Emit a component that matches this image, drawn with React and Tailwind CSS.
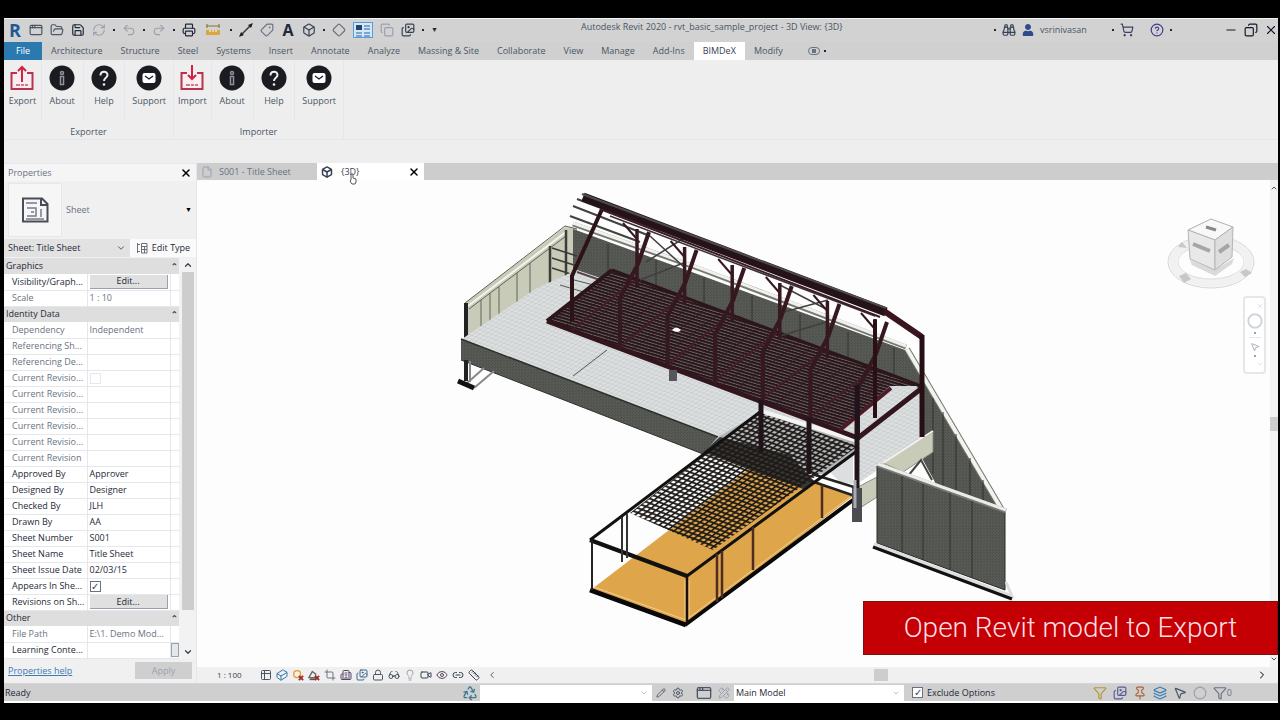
import React from 'react';
import {
    AppWindow, FolderOpen, Save, RefreshCw, Undo2, Redo2, Printer, Tag, Box, Diamond, Copy, X,
    Layers, Binoculars, ShoppingCart, CircleHelp, Minus, File, ChevronDown, ChevronUp, ChevronLeft, ChevronRight,
    Table2, Crop, Eye, Glasses, Lightbulb, Video, Building2, Link2, Ruler, Filter, Circle,
    Settings, PencilRuler, Cuboid, MousePointer2, Pin, Recycle, Images, Pencil, Lock,
} from 'lucide-react';
import { FaUser } from 'react-icons/fa';
import { clsx } from 'clsx';

const Dot = () => <span className="w-0.5 h-0.5 shrink-0 bg-gray-800" />;

const ToolButton = ({ icon: Icon, label, className, wide }) => (
    <button aria-label={label} className={clsx('h-4 shrink-0 flex items-center justify-center', wide ? 'w-5' : 'w-3.5', className)}>
        <Icon className="size-3.5" />
    </button>
);

const MeasureIcon = ({ className }) => (
    <svg viewBox="0 0 14 14" className={className} fill="none">
        <path d="M0 3H14M1 1V5M13 1V5" stroke="#8a7238" />
        <rect x="0" y="7" width="14" height="5" fill="#d9a640" />
        <path d="M4 7V9M7 7V9M10 7V9" stroke="#fff" />
    </svg>
);

const LineIcon = ({ className }) => (
    <svg viewBox="0 0 14 14" className={className}>
        <path d="M2 12L12 2" stroke="#333" strokeWidth="1.5" />
        <path d="M0 14L2 9L5 12ZM14 0L12 5L9 2Z" fill="#222" />
    </svg>
);

const ThinLinesIcon = ({ className }) => (
    <svg viewBox="0 0 14 14" className={className} fill="none">
        <path d="M0 2H6V7H0Z" fill="#24466e" />
        <path d="M8 3H14M8 6H14M0 10H6M8 10H14M0 13H6M8 13H14" stroke="#5b8fc4" strokeWidth="1.500" />
    </svg>
);

const SunOffIcon = ({ className }) => (
    <svg viewBox="0 0 14 14" className={className} fill="none">
        <circle cx="6" cy="6" r="4" fill="#fff3d8" stroke="#dc9a3c" strokeWidth="1.500" />
        <path d="M8 8L13 13M13 8L8 13" stroke="#a02626" strokeWidth="2" />
    </svg>
);

const ShadowOffIcon = ({ className }) => (
    <svg viewBox="0 0 14 14" className={className} fill="none">
        <path d="M1 10L5 3L9 6V10Z" fill="#eee" stroke="#666" strokeWidth="1.500" />
        <path d="M2 12H9" stroke="#555" strokeWidth="2" />
        <path d="M8 8L13 13M13 8L8 13" stroke="#a02626" strokeWidth="2" />
    </svg>
);

const TypeIcon = ({ className }) => (
    <svg viewBox="0 0 12 12" className={className} fill="none" stroke="#6b7078">
        <path d="M1.500 1V11M1.500 2.500H4M1.500 9.500H4M5.500 1.500H11V11H5.500ZM5.500 4.500H11M5.500 7.500H11M8.500 4.500V11" />
    </svg>
);

const TitleBar = () => (
    <header className="relative flex items-center justify-between h-6 bg-[#d2d2d2] border-t border-gray-100 pb-0.5 text-gray-600">
        <div className="flex items-center gap-[7px] pl-1">
            <button aria-label="Application menu" className="w-3.5 text-lg leading-4 font-bold text-[#1b5896]">R</button>
            <ToolButton icon={AppWindow} label="Home" />
            <ToolButton icon={FolderOpen} label="Open" />
            <ToolButton icon={Save} label="Save" className="text-gray-800" />
            <ToolButton icon={RefreshCw} label="Synchronize" className="text-gray-400" />
            <Dot />
            <ToolButton icon={Undo2} label="Undo" className="text-gray-400" />
            <Dot />
            <ToolButton icon={Redo2} label="Redo" className="text-gray-400" />
            <Dot />
            <ToolButton icon={Printer} label="Print" className="text-gray-800" />
            <ToolButton icon={MeasureIcon} label="Measure" wide />
            <Dot />
            <ToolButton icon={LineIcon} label="Aligned dimension" />
            <ToolButton icon={Tag} label="Tag by category" className="-scale-x-100 text-gray-500" />
            <button aria-label="Text" className="w-3.5 text-base leading-4 font-bold text-gray-800">A</button>
            <ToolButton icon={Box} label="Default 3D view" className="text-gray-700" />
            <Dot />
            <ToolButton icon={Diamond} label="Section" className="text-gray-500" />
            <ToolButton icon={ThinLinesIcon} label="Thin lines" wide className="bg-[#d5e6f7] border border-[#5b9bd8]" />
            <ToolButton icon={Copy} label="Close inactive views" className="text-gray-400" />
            <ToolButton icon={Images} label="Switch windows" className="text-gray-700" />
            <Dot />
            <button aria-label="Customize toolbar" className="text-[7px] leading-4 text-gray-800">▼</button>
        </div>
        <h1 className="absolute left-[577px] top-0.5 text-[9px] leading-3 whitespace-nowrap">
            Autodesk Revit 2020 - rvt_basic_sample_project - 3D View: {'{3D}'}
        </h1>
        <div className="flex items-center gap-1.5">
            <Dot />
            <ToolButton icon={Binoculars} label="Search" className="text-gray-700" />
            <FaUser className="size-3 text-[#2c4a8c]" />
            <span className="w-[66px] text-[9px] leading-3">vsrinivasan</span>
            <Dot />
            <ToolButton icon={ShoppingCart} label="App store" className="text-[#3d3f66]" />
            <span className="w-1" />
            <ToolButton icon={CircleHelp} label="Help" className="text-[#3d3f8c]" />
            <Dot />
            <span className="w-10" />
            <ToolButton icon={Minus} label="Minimize" className="text-gray-900" />
            <ToolButton icon={Copy} label="Restore" className="-scale-x-100 text-gray-900" />
            <ToolButton icon={X} label="Close" className="text-gray-900" />
        </div>
    </header>
);

const MENU = [
    'Architecture', 'Structure', 'Steel', 'Systems', 'Insert', 'Annotate', 'Analyze', 'Massing & Site',
    'Collaborate', 'View', 'Manage', 'Add-Ins', 'BIMDeX', 'Modify',
];

const MenuTabs = () => (
    <nav className="flex h-[18px] bg-[#d0d0d0] text-[9px] leading-[18px] text-gray-600">
        <button className="w-[38px] bg-[#2a7ab0] text-white">File</button>
        {MENU.map((name) => (
            <button key={name} className={clsx('px-[9px]', name === 'BIMDeX' && 'bg-white text-gray-700')}>{name}</button>
        ))}
        <button aria-label="Ribbon display" className="flex items-center gap-1 pl-4">
            <span className="w-3 h-2 rounded-full border border-gray-500 flex items-center justify-center">
                <span className="w-1 h-1 bg-gray-500" />
            </span>
            <Dot />
        </button>
    </nav>
);

const ExchangeIcon = ({ up }) => (
    <svg viewBox="0 0 26 26" className="size-[26px]" fill="none" stroke="#b8344e" strokeWidth="2">
        <path d="M8 8H2.500V24H23.500V8H18" fill="#fbeef0" />
        {up ? <path d="M13 17V2M9 6L13 2L17 6" stroke="#d02243" /> : <path d="M13 0V14M9 10L13 14L17 10" stroke="#d02243" />}
        <path d="M7 20H11M12 20H15M16 20H19" stroke="#cf7d8b" />
    </svg>
);

const RoundIcon = ({ kind }) => (
    <svg viewBox="0 0 26 26" className="size-[26px]">
        <circle cx="13" cy="13" r="12.500" fill="#1b1c22" />
        {kind === 'About' && (
            <g fill="none" stroke="#8f929a" strokeWidth="1.500">
                <circle cx="13" cy="8" r="1.500" />
                <rect x="11.500" y="11.500" width="3" height="8" />
            </g>
        )}
        {kind === 'Help' && (
            <g>
                <path d="M9.500 10.500C9.500 5.500 16.500 5.500 16.500 10C16.500 13 13 12.500 13 16" fill="none" stroke="#f0f0f0" strokeWidth="2" />
                <circle cx="13" cy="19.500" r="1.300" fill="#f0f0f0" />
            </g>
        )}
        {kind === 'Support' && (
            <g>
                <rect x="6.500" y="8" width="13" height="10" rx="2" fill="#fff" />
                <path d="M9 11L13 14L17 11" fill="none" stroke="#1b1c22" strokeWidth="1.300" />
            </g>
        )}
    </svg>
);

const RibbonPanel = ({ title, first }) => (
    <section className="flex flex-col w-[170px] border-r border-gray-200">
        <div className="flex">
            {[first, 'About', 'Help', 'Support'].map((name) => (
                <button
                    key={name}
                    className={clsx(
                        'flex flex-col items-center h-[60px] pt-[5px] text-[9px] leading-3 text-gray-600',
                        name === first && 'w-[38px] border-r border-gray-200',
                        name === 'Support' ? 'w-[48px]' : name !== first && 'w-[42px] border-r border-gray-200'
                    )}
                >
                    {name === first ? <ExchangeIcon up={first === 'Export'} /> : <RoundIcon kind={name} />}
                    <span className="mt-1">{name}</span>
                </button>
            ))}
        </div>
        <h2 className="mt-1.5 text-center text-[9px] leading-3 text-gray-600">{title}</h2>
    </section>
);

const ROWS = [
    { group: 'Graphics' },
    { label: 'Visibility/Graph...', edit: true },
    { label: 'Scale', value: '1 : 10', dim: true },
    { group: 'Identity Data' },
    { label: 'Dependency', value: 'Independent', dim: true },
    { label: 'Referencing Sh...', dim: true },
    { label: 'Referencing De...', dim: true },
    { label: 'Current Revisio...', dim: true, check: 'off' },
    { label: 'Current Revisio...', dim: true },
    { label: 'Current Revisio...', dim: true },
    { label: 'Current Revisio...', dim: true },
    { label: 'Current Revisio...', dim: true },
    { label: 'Current Revision', dim: true },
    { label: 'Approved By', value: 'Approver' },
    { label: 'Designed By', value: 'Designer' },
    { label: 'Checked By', value: 'JLH' },
    { label: 'Drawn By', value: 'AA' },
    { label: 'Sheet Number', value: 'S001' },
    { label: 'Sheet Name', value: 'Title Sheet' },
    { label: 'Sheet Issue Date', value: '02/03/15' },
    { label: 'Appears In She...', check: 'on' },
    { label: 'Revisions on Sh...', edit: true },
    { group: 'Other' },
    { label: 'File Path', value: 'E:\\1. Demo Mod...', dim: true },
    { label: 'Learning Conte...', more: true },
];

const CheckBox = ({ label, checked, dim }) => (
    <input
        type="checkbox"
        aria-label={label}
        defaultChecked={checked}
        className={clsx(
            "appearance-none block size-[11px] shrink-0 border bg-white text-[10px] leading-[9px] text-center text-gray-700 checked:before:content-['✓']",
            dim ? 'border-gray-200' : 'border-gray-500'
        )}
    />
);

const PropertyRow = ({ row }) => {
    if (row.group) {
        return (
            <tr className="h-4 bg-[#dedede]">
                <th colSpan={2} scope="colgroup" className="pl-0.5 text-left font-medium text-gray-800">{row.group}</th>
                <th className="text-[8px] leading-3 text-gray-700">⌃</th>
            </tr>
        );
    }
    return (
        <tr className={clsx('h-4 border-b border-gray-200', row.dim ? 'text-gray-500' : 'text-gray-800')}>
            <th scope="row" className="pl-2 text-left font-normal whitespace-nowrap border-r border-gray-200">{row.label}</th>
            <td className="px-0.5 border-r border-gray-200 whitespace-nowrap">
                {row.edit && <button className="block w-full h-3.5 bg-[#e0e0e0] border-b border-r border-gray-400 leading-3">Edit...</button>}
                {row.check && <CheckBox label={row.label} checked={row.check === 'on'} dim={row.dim} />}
                {row.value}
            </td>
            <td>{row.more && <button aria-label="Browse" className="block w-full h-3.5 bg-gray-200 border border-gray-400" />}</td>
        </tr>
    );
};

const SheetIcon = () => (
    <svg viewBox="0 0 28 26" className="w-7 h-[26px]" fill="none" stroke="#4a4c58" strokeWidth="2">
        <path d="M2 1.500H21L26.500 7V24.500H2Z" fill="#f6f6f8" />
        <path d="M20 2V8H26" />
        <path d="M5 6H16M6 11H15V19H6M10 15H13M20 12V20M5 22H23" stroke="#777a88" strokeWidth="1.500" />
    </svg>
);

const PropertiesPanel = () => (
    <aside className="flex flex-col w-[193px] shrink-0 bg-[#f0f0f0] text-[9px] leading-3 text-gray-700 border-r border-gray-200">
        <div className="flex items-center justify-between h-[18px] pl-1 pr-1 bg-[#f5f5f5] border-t border-gray-200">
            <h2 className="text-gray-500">Properties</h2>
            <button aria-label="Close properties"><X className="size-3 text-black" strokeWidth={3} /></button>
        </div>
        <button className="flex items-center h-[57px] pl-1 pr-1">
            <span className="flex items-center justify-center w-[54px] h-[54px] bg-[#f6f6f6] border border-gray-200"><SheetIcon /></span>
            <span className="flex-1 pl-1 text-left text-gray-500">Sheet</span>
            <span className="text-[7px] text-black">▼</span>
        </button>
        <div className="flex items-center h-5">
            <div className="relative w-[126px]">
                <select aria-label="Instance" className="appearance-none w-full h-[18px] pl-1 bg-[#e2e2e2] text-gray-800">
                    <option>Sheet: Title Sheet</option>
                </select>
                <ChevronDown className="absolute right-1 top-1 size-2.5 pointer-events-none" />
            </div>
            <button className="flex flex-1 items-center justify-center gap-1 h-[18px] bg-[#fafafa] text-gray-800">
                <TypeIcon className="size-3" />
                Edit Type
            </button>
        </div>
        <div className="flex">
            <table className="table-fixed w-[175px] bg-white border-collapse leading-3">
                <colgroup>
                    <col className="w-[83px]" />
                    <col className="w-[83px]" />
                    <col className="w-[9px]" />
                </colgroup>
                <tbody>
                    {ROWS.map((row, i) => <PropertyRow key={i} row={row} />)}
                </tbody>
            </table>
            <div className="flex flex-1 flex-col items-center justify-between bg-[#f2f2f2]">
                <ChevronUp className="my-0.5 size-2.5 shrink-0" strokeWidth={3} />
                <span className="w-3 h-[338px] bg-[#cdcdcd]" />
                <span className="flex-1" />
                <ChevronDown className="my-0.5 size-2.5 shrink-0" strokeWidth={3} />
            </div>
        </div>
        <div className="flex flex-1 items-center justify-between pl-1 pr-1">
            <a href="#help" className="text-[#3f7ab8] underline">Properties help</a>
            <button className="w-[57px] h-[17px] bg-[#cfcfcf] text-gray-400">Apply</button>
        </div>
    </aside>
);

const DocumentTabs = () => (
    <div className="flex h-[17px] bg-[#cdcdcd] text-[9px] leading-3">
        <button className="flex items-center gap-1.5 w-[120px] pl-1 text-gray-500">
            <File className="size-3 text-gray-400" />
            S001 - Title Sheet
        </button>
        <div className="relative flex items-center justify-between w-[107px] pl-1 pr-1 bg-white">
            <button className="flex items-center gap-2 text-gray-700">
                <Box className="size-3" strokeWidth={3} />
                {'{3D}'}
            </button>
            <button aria-label="Close view"><X className="size-3 text-black" strokeWidth={3} /></button>
            <svg viewBox="0 0 8 12" className="absolute left-8 top-2.5 w-2 h-3">
                <path d="M2 7V1H4V5L7 6V9L6 11H3L1 8Z" fill="#fff" stroke="#555" />
            </svg>
        </div>
    </div>
);

// Front columns of the steel frame, one bay apart
const BAYS = [0, 1, 2, 3, 4, 5];

const Model = () => (
    <svg viewBox="197 180 1073 487" className="block w-full h-full" fill="none" role="img" aria-label="3D structural model">
        <defs>
            <pattern id="tiles" width="4" height="4" patternUnits="userSpaceOnUse" patternTransform="matrix(1 .38 -1 .7 0 0)">
                <rect width="4" height="4" fill="#dcdfdf" />
                <path d="M0 0H4M0 0V4" stroke="#bdc1c2" strokeWidth=".8" />
            </pattern>
            <pattern id="joists" width="14" height="3" patternUnits="userSpaceOnUse" patternTransform="matrix(1 .3 -1 .75 0 0)">
                <rect width="14" height="3" fill="#6e605f" />
                <path d="M0 1H14" stroke="#24151a" strokeWidth="2" />
                <path d="M0 0V3" stroke="#34151d" strokeWidth="1.500" />
            </pattern>
            <pattern id="mesh" width="5" height="4" patternUnits="userSpaceOnUse" patternTransform="matrix(1 .38 -1 .78 0 0)">
                <path d="M0 1H5M1 0V4" stroke="#1c1815" strokeWidth="1.800" />
            </pattern>
            <pattern id="concrete" width="3" height="3" patternUnits="userSpaceOnUse">
                <rect width="3" height="3" fill="#575955" />
                <path d="M0 0H1V1H0ZM2 1H3V2H2Z" fill="#4b4d49" />
            </pattern>
        </defs>

        {/* left and rear walls */}
        <path d="M465 303L565 227L577 229V272L540 289L468 340Z" fill="#c9cbb9" />
        <path d="M465 303L565 226L577 229" stroke="#5c5e55" />
        <path d="M468 306L566 232" stroke="#f4f4ee" strokeWidth="2" />
        <path d="M469 309L566 236M481 300V328M490 293V322M499 287V316M517 273V302M530 263V293" stroke="#62645a" />
        <path d="M550 246V288M566 230V277M575 230V272" stroke="#3c3e38" strokeWidth="2.500" />
        <path d="M466 303V340" stroke="#222" strokeWidth="4" />
        <path d="M573 229L700 275L905 350L922 380V400L700 330L573 268Z" fill="url(#concrete)" />
        <path d="M573 224L700 269L906 347" stroke="#777972" strokeWidth="5" />
        <path d="M573 223L700 268L906 346" stroke="#f0f0ec" strokeWidth="3" />
        <path d="M608 244V278M656 260V296M704 278V314M752 296V330M800 314V350M848 332V368M894 348V384" stroke="#33352f" />
        <path d="M552 248L577 256M552 258L577 266M552 268L577 276" stroke="#3a3c3a" strokeWidth="1.500" />

        {/* concrete deck */}
        <path d="M462 339L537 288L577 270L922 388L933 432L860 482L858 438L761 410L718 438Z" fill="url(#tiles)" />
        <path d="M461 339L718 437L703 454L461 360Z" fill="url(#concrete)" />
        <path d="M461 339L718 437" stroke="#2f302c" strokeWidth="1.500" />
        <path d="M461 360L703 454" stroke="#2f302c" />
        <path d="M573 376L607 350M560 285L600 297M570 279L598 286" stroke="#555" />
        <path d="M577 272L600 280" stroke="#5a4548" strokeWidth="2" />
        <path d="M470 361V382M494 371L474 388M484 368L466 384" stroke="#888" strokeWidth="2" />
        <path d="M466 360V381" stroke="#222" strokeWidth="4" />
        <path d="M458 381L474 388" stroke="#111" strokeWidth="5" />

        {/* raking wall */}
        <path d="M908 352L925 378L998 506L937 486L923 460V400L905 360Z" fill="url(#concrete)" />
        <path d="M907 349L1002 510" stroke="#73756d" strokeWidth="6" />
        <path d="M907 349L1002 510" stroke="#f2f2ee" strokeWidth="4" />
        <path d="M933 398V474M943 412V486M956 434V490M970 458V495M983 480V500" stroke="#2e302b" />
        <path d="M883 463L933 432V452L903 472ZM858 487L877 477V497L860 508Z" fill="#c9cbb9" stroke="#8b8d80" />
        <path d="M883 463L933 431" stroke="#f4f4ee" strokeWidth="2" />
        <path d="M908 476L921 460L932 480" stroke="#444" strokeWidth="2" />
        <path d="M877 466L1005 512V590L877 543Z" fill="url(#concrete)" stroke="#2b2c28" />
        <path d="M878 465L1006 511" stroke="#777" strokeWidth="5" />
        <path d="M878 464L1006 510" stroke="#ecece6" strokeWidth="3" />
        <path d="M902 476V552M923 484V560M950 493V570M972 501V578" stroke="#30322c" />
        <path d="M874 544L1012 596L1006 582" stroke="#ddd" strokeWidth="3" />
        <path d="M873 547L1012 599" stroke="#111" strokeWidth="3" />

        {/* lower pavilion */}
        <path d="M592 589L758 462L822 485L853 496L686 624Z" fill="#dfa54b" />
        <path d="M687 577L818 482L853 496L687 624Z" fill="#dfa54b" />
        <path d="M828 470L853 452V484L840 482Z" fill="#dcdedf" />
        <path d="M718 437L761 411L858 441V452L828 474L790 475L703 454Z" fill="#b4b6b8" />
        <path d="M703 452L720 437L790 455L815 482L806 490L755 472Z" fill="#383733" />
        <path d="M630 513L760 412L858 446L713 550Z" fill="url(#mesh)" />
        <path d="M761 411L858 441" stroke="#f4f4f4" strokeWidth="4" />
        <path d="M812 474L857 488M808 480L855 496" stroke="#222" strokeWidth="2.500" />
        <path d="M590 540L760 412" stroke="#111" strokeWidth="3" />
        <path d="M590 540L687 576" stroke="#111" strokeWidth="4.500" />
        <path d="M687 576L857 451" stroke="#111" strokeWidth="3" />
        <path d="M590 590L686 625" stroke="#090909" strokeWidth="5" />
        <path d="M685 625L857 497" stroke="#090909" strokeWidth="4" />
        <path d="M685 580V619M689 580V619M594 587L686 620L850 497" stroke="#f0cf94" />
        <path d="M592 540V590" stroke="#222" strokeWidth="2" />
        <path d="M622 517V562M627 514V558" stroke="#333" strokeWidth="2" />
        <path d="M687 576V624" stroke="#1b0d08" strokeWidth="2.500" />
        <path d="M717 554V602M722 551V598M753 527V570M822 485V518" stroke="#4c2d20" strokeWidth="2.500" />

        {/* upper steel frame */}
        <path d="M547 321L612 270L921 386L890 386L838 431Z" fill="url(#joists)" />
        <path d="M612 270L921 386" stroke="#2c161c" strokeWidth="3" />
        <path d="M547 321L612 270" stroke="#2c161c" strokeWidth="4" />
        <path d="M547 321L858 438L922 388" stroke="#32151d" strokeWidth="5" />
        <path d="M840 430L891 388" stroke="#4c1b26" strokeWidth="4" />
        <path d="M572 330L635 280M620 347L680 298M667 365L728 316M713 382L776 333M761 400L823 351M809 418L872 370" stroke="#451f28" strokeWidth="2" />
        <path d="M573 206L650 236M570 216L640 242M577 199L660 230" stroke="#424242" strokeWidth="2" />
        <path d="M610 216L875 316" stroke="#3a3135" strokeWidth="1.500" />
        <path d="M650 236L685 268M684 238L646 262M780 285L828 310M828 300L784 312M640 280L686 262M780 336L826 322" stroke="#404040" strokeWidth="1.500" />
        <path d="M603 207L572 276V322" stroke="#2c131a" strokeWidth="4" />
        {BAYS.map((i) => (
            <g key={i} transform={`translate(${i * 47.6} ${i * 18})`} stroke="#351820">
                <path d="M637 229V286" strokeWidth="3.500" />
                <path d="M649 232L638 264L620 298V350" strokeWidth="4" />
                <path d="M623 223L636 238" strokeWidth="2" />
            </g>
        ))}
        <path d="M875 320V418" stroke="#2a1016" strokeWidth="4" />
        <path d="M761 400V452M809 418V474M857 385V490" stroke="#20141a" strokeWidth="5" />
        <path d="M583 197L886 312" stroke="#241319" strokeWidth="9" />
        <path d="M582 194L886 308" stroke="#4e4b4e" strokeWidth="2" />
        <path d="M600 209L880 317" stroke="#3f1b25" strokeWidth="2" />
        <path d="M884 311L922 337" stroke="#3a151e" strokeWidth="6" />
        <path d="M922 335V437" stroke="#250f15" strokeWidth="5" />
        <path d="M673 370V381" stroke="#55575c" strokeWidth="8" />
        <path d="M857 488V522" stroke="#4a4c50" strokeWidth="10" />
        <path d="M855 480V508" stroke="#a8abb0" strokeWidth="3" />
        <path d="M672 330Q676 325 681 330Q678 334 672 330Z" fill="#fff" />
    </svg>
);

const ViewCube = () => (
    <svg viewBox="0 0 90 76" className="w-[90px] h-[76px]" fill="none">
        <ellipse cx="45" cy="46" rx="38" ry="21" stroke="#f1f1f1" strokeWidth="8" />
        <ellipse cx="45" cy="46" rx="43" ry="26" stroke="#d6d6d6" />
        <ellipse cx="45" cy="46" rx="33" ry="17" stroke="#dedede" />
        <path d="M13 60L20 57L25 63L18 67ZM74 56L80 53L86 57L79 61Z" fill="#c8c8c8" />
        <path d="M12 31L16 26L21 32Z" fill="#c8c8c8" />
        <path d="M24 44L49 54L68 42L66 48L49 60L26 49Z" fill="#dadada" />
        <path d="M22 14L45 3L67 11L49 24Z" fill="#f8f8f8" stroke="#b0b0b0" />
        <path d="M22 14L49 24V54L24 43Z" fill="#e8e8e8" stroke="#b4b4b4" />
        <path d="M67 11L49 24V54L66 41Z" fill="#dedede" stroke="#b4b4b4" />
        <path d="M40 11L50 14" stroke="#888" strokeWidth="3" />
        <path d="M27 28L44 35M53 36L63 29" stroke="#a6a6a6" strokeWidth="4" />
    </svg>
);

const NavigationBar = () => (
    <div className="flex flex-col items-center justify-between w-[23px] h-[78px] py-1 rounded border-2 border-gray-200 bg-white text-gray-300">
        <X className="size-2 self-end" />
        <Circle className="size-4" strokeWidth={3} />
        <span className="w-0.5 h-0.5 bg-gray-400" />
        <span className="w-3 border-t border-gray-200" />
        <MousePointer2 className="size-2.5 text-gray-400" />
        <span className="w-0.5 h-0.5 bg-gray-400" />
        <ChevronDown className="size-2 self-end" />
    </div>
);

const VIEW_TOOLS = [
    [Table2, 'Detail level', 'text-gray-600'],
    [Cuboid, 'Visual style', 'text-[#2f78ad]'],
    [SunOffIcon, 'Sun path', 'text-[#c87824]'],
    [ShadowOffIcon, 'Shadows', 'text-[#80424a]'],
    [Crop, 'Crop view', 'text-gray-500'],
    [Building2, 'Show crop region', 'text-[#584868]'],
    [Images, 'Lock 3D view', 'text-[#3f668c]'],
    [Lock, 'Unlocked view', 'text-gray-600'],
    [Glasses, 'Temporary hide', 'text-gray-600'],
    [Lightbulb, 'Reveal hidden', 'text-gray-400'],
    [Video, 'Worksharing display', 'text-gray-700'],
    [Eye, 'Temporary view properties', 'text-[#5e4964]'],
    [Link2, 'Analytical model', 'text-gray-700'],
    [Ruler, 'Reveal constraints', 'text-gray-700'],
];

const ViewControlBar = () => (
    <div className="flex items-center h-4 bg-[#f0f0f0] text-gray-700">
        <span className="w-[62px] pl-5 shrink-0 text-[8px] leading-3">1 : 100</span>
        <div className="flex items-center gap-0.5">
            {VIEW_TOOLS.map(([Icon, label, color]) => (
                <button key={label} aria-label={label} className={color}><Icon className="size-3.5 p-px" strokeWidth={2} /></button>
            ))}
            <ChevronLeft className="size-2.5 ml-1" />
        </div>
        <div className="flex flex-1 items-center justify-end">
            <span className="w-3.5 h-3 bg-[#cdcdcd]" />
            <span className="w-[368px]" />
            <ChevronRight className="size-3 text-black" />
            <span className="w-2.5" />
        </div>
    </div>
);

const STATUS_TOOLS = [
    [Filter, 'Select links', 'text-[#b5962e]'],
    [Images, 'Select underlay', 'text-[#5a5c9a]'],
    [Pin, 'Select pinned', 'text-[#b0643a]'],
    [Layers, 'Select by face', 'text-[#3a7db0]'],
    [MousePointer2, 'Drag elements', 'text-gray-600'],
    [Circle, 'Background processes', 'text-gray-400'],
];

const StatusBar = () => (
    <footer className="flex items-center h-[18px] bg-[#cfcfcf] border-t border-gray-300 text-[9px] leading-3 text-gray-800">
        <span className="w-[458px] pl-px">Ready</span>
        <Recycle className="size-4 mr-0.5 text-[#3b7c93]" />
        <div className="relative w-[172px]">
            <select aria-label="Workset" className="appearance-none block w-full h-4 bg-white"><option></option></select>
            <ChevronDown className="absolute right-1 top-1 size-2 text-gray-400 pointer-events-none" />
        </div>
        <div className="flex items-center gap-1.5 pl-1 pr-1 text-gray-600">
            <Pencil className="size-2.5" />
            <Settings className="size-3" />
            <AppWindow className="size-4 ml-1.5" />
            <PencilRuler className="size-3 text-gray-400" />
        </div>
        <div className="relative w-[170px]">
            <select aria-label="Design option" className="appearance-none block w-full h-4 pl-0.5 bg-white"><option>Main Model</option></select>
            <ChevronDown className="absolute right-1 top-1 size-2 text-gray-400 pointer-events-none" />
        </div>
        <label className="flex items-center gap-1 pl-2">
            <CheckBox label="Exclude Options" checked />
            Exclude Options
        </label>
        <div className="flex flex-1 items-center justify-end gap-1.5 pr-[46px]">
            {STATUS_TOOLS.map(([Icon, label, color]) => (
                <button key={label} aria-label={label} className={color}><Icon className="size-3.5" /></button>
            ))}
            <button className="flex items-center text-gray-500"><Filter className="size-3.5" />0</button>
        </div>
    </footer>
);

export default function App() {
    return (
        <div className="flex flex-col min-h-screen pt-[18px] pb-[17px] pl-1 pr-0.5 bg-black font-['Open_Sans','Noto_Sans',sans-serif]">
            <div className="flex flex-1 flex-col border-b-2 border-white bg-[#eeeeee]">
                <TitleBar />
                <MenuTabs />
                <div className="flex h-20 border-b border-gray-200">
                    <RibbonPanel title="Exporter" first="Export" />
                    <RibbonPanel title="Importer" first="Import" />
                </div>
                <main className="flex flex-1 pt-[23px]">
                    <PropertiesPanel />
                    <div className="relative flex flex-1 flex-col min-w-0 bg-[#fdfdfd]">
                        <DocumentTabs />
                        <div className="flex flex-1">
                            <div className="relative flex-1 min-w-0">
                                <Model />
                                <div className="absolute right-3.5 top-9 flex flex-col items-center gap-1">
                                    <ViewCube />
                                    <div className="self-end -mr-2.5"><NavigationBar /></div>
                                </div>
                            </div>
                            <div className="flex flex-col items-center justify-between w-2 py-1 bg-[#f2f2f2]">
                                <ChevronUp className="size-2" />
                                <span className="w-2 h-3.5 bg-[#cdcdcd]" />
                                <ChevronDown className="size-2" />
                            </div>
                        </div>
                        <ViewControlBar />
                        <p className="absolute right-0 bottom-7 flex items-center justify-center w-[415px] h-[54px] bg-[#c40005] border border-[#7c1010] font-['Roboto',sans-serif] font-light text-[28px] text-[#ffdfe2] whitespace-nowrap">
                            Open Revit model to Export
                        </p>
                    </div>
                </main>
                <StatusBar />
            </div>
        </div>
    );
}
